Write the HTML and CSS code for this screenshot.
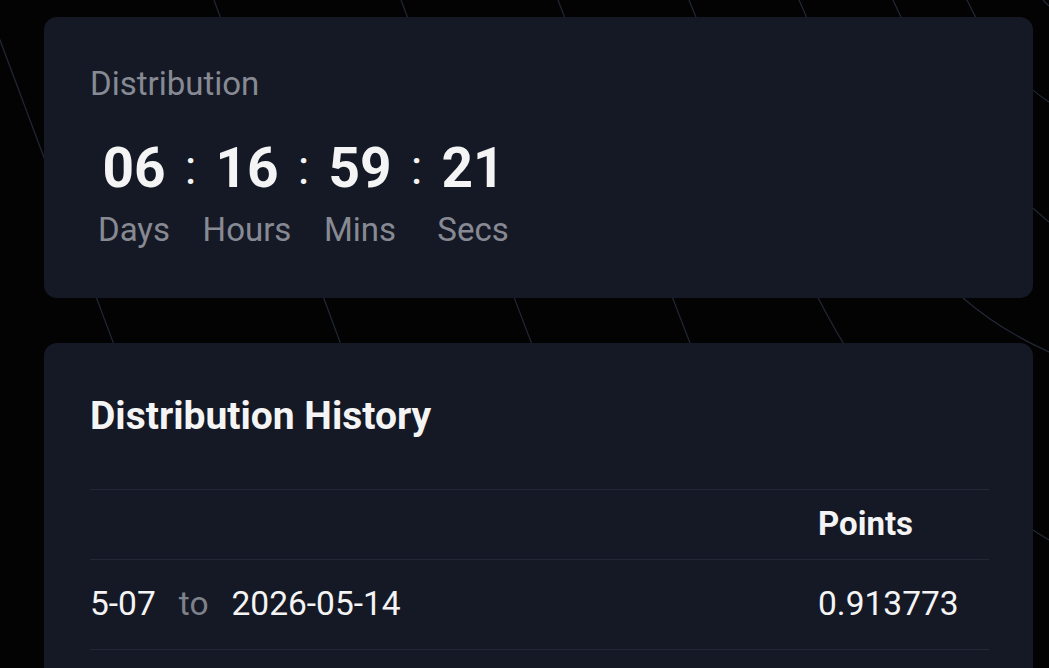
FILE: index.html
```html
<!DOCTYPE html>
<html lang="en">
<head>
  <meta charset="UTF-8" />
  <meta name="viewport" content="width=device-width, initial-scale=1.0" />
  <title>Distribution</title>
  <link rel="stylesheet" href="styles.css">
</head>
<body>
  <!-- decorative grid behind the cards -->
  <svg class="backdrop" viewBox="0 0 1049 668" preserveAspectRatio="none" aria-hidden="true">
    <g fill="none" stroke="#222836" stroke-width="1.2">
      <path d="M-15 0 L235 668" />
      <path d="M214 0 L460 668" />
      <path d="M401 0 L655 668" />
      <path d="M558 0 L815 668" />
      <path d="M689 0 Q790 250 830 320 Q900 450 1049 540" />
      <path d="M799 0 Q900 230 963 298 Q1000 330 1049 352" />
      <path d="M893 0 Q960 150 1049 222" />
      <path d="M967 0 Q1000 70 1049 102" />
      <path d="M1043 0 L1049 6" />
    </g>
  </svg>

  <div class="page">
    <div class="card">
      <div class="label">Distribution</div>
      <div class="countdown">
        <span class="num">06</span><span class="sep">:</span>
        <span class="num">16</span><span class="sep">:</span>
        <span class="num">59</span><span class="sep">:</span>
        <span class="num">21</span>
        <span class="unit">Days</span><span></span>
        <span class="unit">Hours</span><span></span>
        <span class="unit">Mins</span><span></span>
        <span class="unit">Secs</span>
      </div>
    </div>

    <div class="card history">
      <h2>Distribution History</h2>
      <div class="table">
        <div class="row head">
          <div class="cell-date"></div>
          <div class="cell-points">Points</div>
        </div>
        <div class="row body-row">
          <div class="cell-date">
            <span>5-07</span>
            <span class="muted">to</span>
            <span>2026-05-14</span>
          </div>
          <div class="cell-points">0.913773</div>
        </div>
      </div>
    </div>
  </div>
</body>
</html>
```

FILE: styles.css
```css
body {
  margin: 0;
  background-color: #030303;
  font-family: Roboto, "Liberation Sans", sans-serif;
  color: #f4f4f4;
  overflow: hidden;
}
.backdrop {
  position: fixed;
  top: 0;
  left: 0;
  width: 100%;
  height: 100%;
  z-index: -1;
}
.page {
  padding: 17px 16px 0 44px;
  display: flex;
  flex-direction: column;
  gap: 45px;
}
.card {
  background-color: #151926;
  border-radius: 13px;
  padding: 47px 44px 48px 46px;
}
.label {
  font-size: 33px;
  line-height: 40px;
  color: #878a93;
}
.countdown {
  margin-top: 34px;
  display: grid;
  grid-template-columns: 90px 23px 90px 23px 90px 23px 90px;
  row-gap: 12px;
  margin-left: -1px;
}
.num {
  font-size: 55px;
  font-weight: 700;
  line-height: 60px;
  text-align: center;
}
.sep {
  font-size: 48px;
  line-height: 60px;
  text-align: center;
}
.unit {
  font-size: 33px;
  line-height: 40px;
  color: #878a93;
  text-align: center;
}
.history {
  padding-top: 50px;
}
h2 {
  margin: 0;
  font-size: 39px;
  font-weight: 700;
  line-height: 46px;
}
.table {
  margin-top: 50px;
  border-top: 1px solid #232836;
}
.row {
  display: flex;
  border-bottom: 1px solid #232836;
  font-size: 33.5px;
  line-height: 40px;
}
.head {
  padding: 14px 0 15px;
  font-weight: 700;
  font-size: 33px;
}
.body-row {
  padding: 24px 0 25px;
}
.cell-date {
  flex: 1;
  display: flex;
  gap: 23px;
}
.cell-points {
  width: 171px;
}
.muted {
  color: #7e818a;
}
```
